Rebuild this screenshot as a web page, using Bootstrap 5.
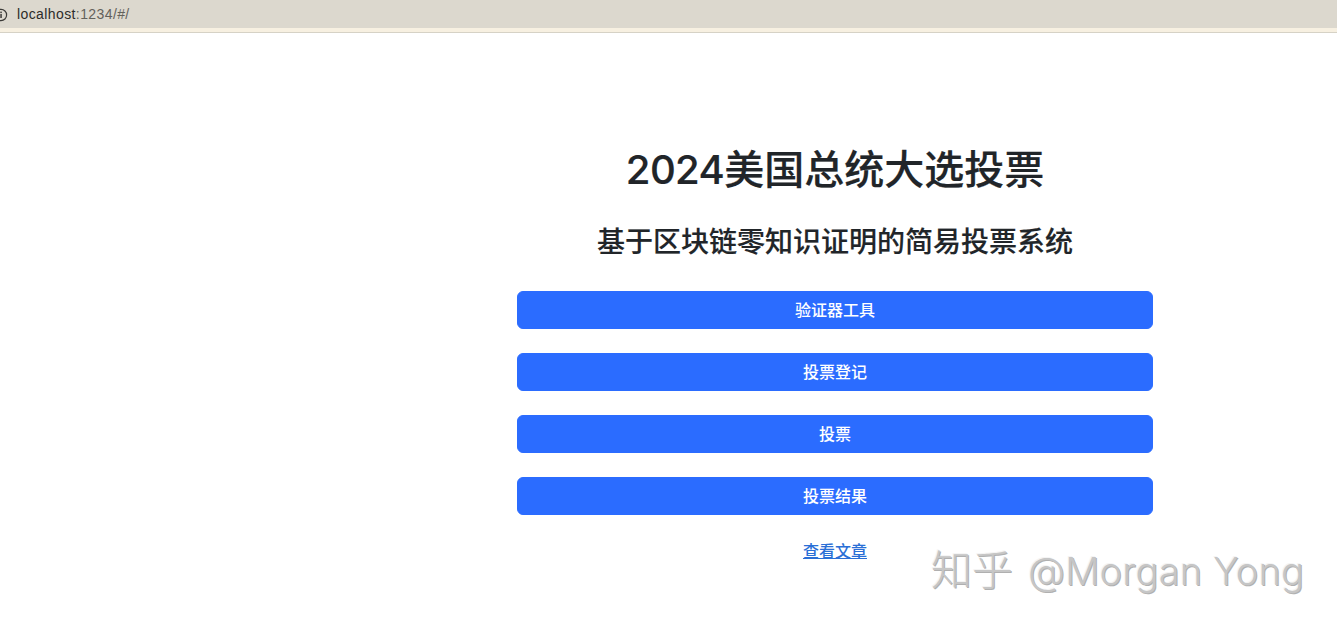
<!DOCTYPE html>
<html lang="zh-CN">
<head>
<meta charset="utf-8">
<title>2024美国总统大选投票</title>
<link href="https://cdn.jsdelivr.net/npm/bootstrap@5.3.0/dist/css/bootstrap.min.css" rel="stylesheet">
<style>
html, body { height: 631px; overflow: hidden; }
body { font-family: "Inter", "Liberation Sans", "Noto Sans CJK SC", sans-serif; color: #212529; background: #fff; position: relative; }
.addr-bar { height: 33px; background: #f7f0e1; border-bottom: 1px solid #d6d2c6; }
.addr-row { height: 28px; background: #dcd8ce; padding-top: 1px; }
.addr-icon { margin-left: -6px; margin-right: 9px; }
.addr-text { font-size: 14px; letter-spacing: .4px; color: #2c2c2a; font-family: "Liberation Sans", sans-serif; }
.addr-port { color: #63615b; }
.vote-wrap { width: 636px; margin-left: 517px; padding-top: 109px; }
.vote-title { font-size: 40px; line-height: 56px; font-weight: 500; margin: 0 0 24px; -webkit-text-stroke: .2px #212529; }
.vote-digits { letter-spacing: -.6px; }
.vote-sub { font-size: 28px; line-height: 40px; font-weight: 500; margin: 0 0 29px; -webkit-text-stroke: .15px #212529; }
.vote-btn { height: 38px; font-size: 16px; font-weight: 500; line-height: 24px; padding: 6px 12px; border-radius: 6px; background: #2b6cff; border: 1px solid #2b6cff; color: #fff; }
.vote-btn:hover { background: #2b6cff; color: #fff; }
.vote-link { font-size: 16px; line-height: 24px; color: #2a6fd6; margin-top: 24px; font-weight: 500; }
.zh-mark { position: absolute; left: 931px; top: 541px; font-size: 41px; line-height: 52px; color: #c6c6c6; text-shadow: 1px 1px 0 #b0b0b0, -1px -1px 0 #f4f4f4; font-family: "Noto Sans CJK SC", sans-serif; font-weight: 300; white-space: nowrap; }
.zh-latin { font-family: "Inter", "Liberation Sans", sans-serif; font-size: 38px; font-weight: 300; letter-spacing: .2px; margin-left: 6px; }
</style>
</head>
<body>
<div class="addr-bar">
  <div class="addr-row d-flex align-items-center">
    <svg class="addr-icon" width="14" height="14" viewBox="0 0 14 14" fill="none"><circle cx="7" cy="7" r="5.6" stroke="#3b3a37" stroke-width="1.2"/><rect x="6.3" y="6" width="1.5" height="4" fill="#3b3a37"/><rect x="6.3" y="3.6" width="1.5" height="1.5" fill="#3b3a37"/></svg>
    <span class="addr-text">localhost<span class="addr-port">:1234/#/</span></span>
  </div>
</div>
<main class="vote-wrap d-flex flex-column text-center">
  <h1 class="vote-title"><span class="vote-digits">2024</span>美国总统大选投票</h1>
  <h2 class="vote-sub">基于区块链零知识证明的简易投票系统</h2>
  <div class="d-grid gap-4">
    <button type="button" class="btn vote-btn">验证器工具</button>
    <button type="button" class="btn vote-btn">投票登记</button>
    <button type="button" class="btn vote-btn">投票</button>
    <button type="button" class="btn vote-btn">投票结果</button>
  </div>
  <a class="vote-link" href="#">查看文章</a>
</main>
<div class="zh-mark">知乎 <span class="zh-latin">@Morgan Yong</span></div>
<script src="https://cdn.jsdelivr.net/npm/bootstrap@5.3.0/dist/js/bootstrap.bundle.min.js"></script>
</body>
</html>
